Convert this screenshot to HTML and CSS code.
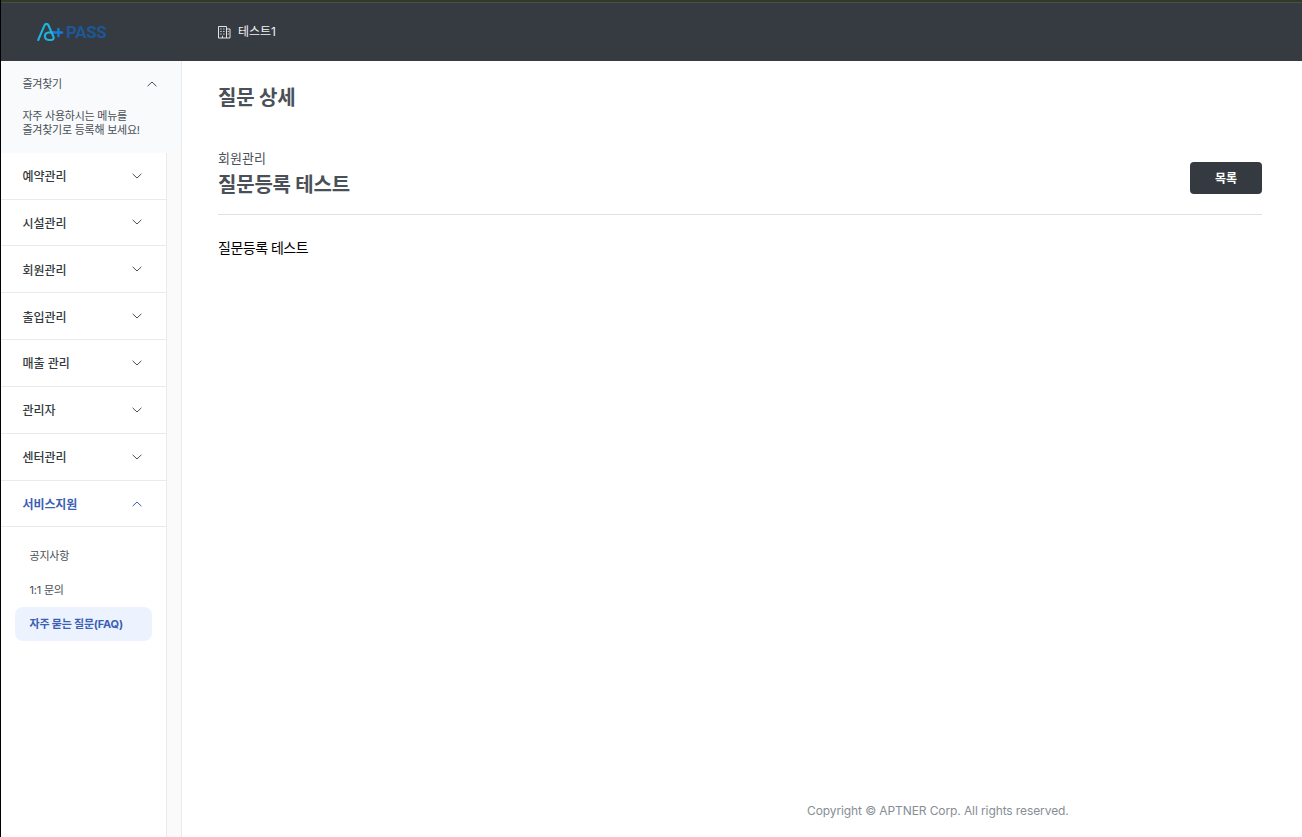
FILE: index.html
```
<!DOCTYPE html>
<html lang="ko">

<head>
  <meta charset="UTF-8" />
  <meta name="viewport" content="width=device-width, initial-scale=1.0" />
  <title>A+ PASS</title>
  <link rel="stylesheet" href="styles.css">
</head>

<body>
  <header class="header">
    <a class="logo" href="#">
      <svg width="27" height="20" viewBox="0 0 27 20" fill="none" stroke-linecap="round" stroke-linejoin="round">
        <path d="M1.2 18 L7.6 3.2 C8.4 1.4 10.6 1.4 11.4 3.2 L16.4 14.6 C17.2 16.7 16 18 14 18 L11.8 18 C6.2 17.8 7 10.8 11.7 10.5 L17 10.5" stroke="#1db5df" stroke-width="2.1" />
        <path d="M17 10.5 H25 M21.4 7 V14" stroke="#197bd9" stroke-width="2.4" />
      </svg>
      <span class="logo-text">PASS</span>
    </a>
    <div class="center-name">
      <svg width="14" height="14" viewBox="0 0 14 14" fill="none" stroke="#e1e3e5">
        <path d="M1.5 1.5 H9.5 V13 H1.5 Z M9.5 4 H13 V13 H9.5" />
        <path d="M3.3 4 H4.6 M6.2 4 H7.5 M3.3 6.5 H4.6 M6.2 6.5 H7.5 M3.3 9 H4.6 M6.2 9 H7.5 M10.7 6.5 H11.8 M10.7 9 H11.8 M5.5 10.8 V13" />
      </svg>
      <span>테스트1</span>
    </div>
  </header>

  <div class="container">
    <aside class="sidebar">
      <div class="favorite">
        <div class="favorite-title">
          <span>즐겨찾기</span>
          <svg class="arrow" viewBox="0 0 10 6"><path d="M.6 5.2 L5 1 L9.4 5.2" /></svg>
        </div>
        <p>자주 사용하시는 메뉴를<br>즐겨찾기로 등록해 보세요!</p>
      </div>
      <nav class="menu">
        <div class="menu-item"><span>예약관리</span><svg class="arrow" viewBox="0 0 10 6"><path d="M.6 .8 L5 5 L9.4 .8" /></svg></div>
        <div class="menu-item"><span>시설관리</span><svg class="arrow" viewBox="0 0 10 6"><path d="M.6 .8 L5 5 L9.4 .8" /></svg></div>
        <div class="menu-item"><span>회원관리</span><svg class="arrow" viewBox="0 0 10 6"><path d="M.6 .8 L5 5 L9.4 .8" /></svg></div>
        <div class="menu-item"><span>출입관리</span><svg class="arrow" viewBox="0 0 10 6"><path d="M.6 .8 L5 5 L9.4 .8" /></svg></div>
        <div class="menu-item"><span>매출 관리</span><svg class="arrow" viewBox="0 0 10 6"><path d="M.6 .8 L5 5 L9.4 .8" /></svg></div>
        <div class="menu-item"><span>관리자</span><svg class="arrow" viewBox="0 0 10 6"><path d="M.6 .8 L5 5 L9.4 .8" /></svg></div>
        <div class="menu-item"><span>센터관리</span><svg class="arrow" viewBox="0 0 10 6"><path d="M.6 .8 L5 5 L9.4 .8" /></svg></div>
        <div class="menu-item open"><span>서비스지원</span><svg class="arrow" viewBox="0 0 10 6"><path d="M.6 5.2 L5 1 L9.4 5.2" /></svg></div>
        <ul class="submenu">
          <li>공지사항</li>
          <li>1:1 문의</li>
          <li class="active">자주 묻는 질문(FAQ)</li>
        </ul>
      </nav>
    </aside>

    <main class="content">
      <h1>질문 상세</h1>
      <div class="question-head">
        <div class="question-title">
          <p class="category">회원관리</p>
          <h2>질문등록 테스트</h2>
        </div>
        <button type="button" class="list-button">목록</button>
      </div>
      <div class="question-body">질문등록 테스트</div>
      <footer class="footer">Copyright © APTNER Corp. All rights reserved.</footer>
    </main>
  </div>
</body>

</html>
```

FILE: styles.css
```
* {
  box-sizing: border-box;
}

html,
body {
  margin: 0;
  padding: 0;
  height: 100%;
}

body {
  display: flex;
  flex-direction: column;
  font-family: Inter, "Noto Sans CJK KR", sans-serif;
  color: #495057;
  background: #fff;
  border-left: 1px solid #000;
  overflow: hidden;
}

h1,
h2,
p,
ul {
  margin: 0;
  padding: 0;
}

/* header */
.header {
  display: flex;
  align-items: center;
  flex: 0 0 61px;
  background: #363b41;
  border-top: 2px solid #31392b;
  box-shadow: inset 0 1px #495045;
}

.logo {
  display: flex;
  align-items: center;
  gap: 2px;
  width: 216px;
  padding-left: 36px;
  text-decoration: none;
}

.logo-text {
  font-family: Roboto, sans-serif;
  font-size: 17px;
  font-weight: 700;
  line-height: 20px;
  letter-spacing: -0.4px;
  color: #1c5897;
}

.center-name {
  display: flex;
  align-items: center;
  gap: 7px;
  font-size: 12px;
  line-height: 18px;
  color: #f1f3f5;
}

/* sidebar */
.container {
  display: flex;
  flex: 1;
  min-height: 0;
}

.sidebar {
  display: flex;
  flex-direction: column;
  width: 181px;
  background: #fafafa;
  border-right: 1px solid #e9eaec;
}

.arrow {
  width: 10px;
  height: 6px;
  fill: none;
  stroke: #495057;
  stroke-width: 1;
}

.favorite {
  height: 91.7px;
  padding: 14px 24px 0 21.5px;
  background: #f8fafc;
  font-size: 11px;
  letter-spacing: -0.25px;
}

.favorite-title {
  display: flex;
  justify-content: space-between;
  align-items: center;
  line-height: 18px;
}

.favorite p {
  margin-top: 16px;
  line-height: 14px;
  white-space: nowrap;
}

.menu {
  flex: 1;
  width: 166px;
  background: #fff;
  border-right: 1px solid #e9eaec;
}

.menu-item {
  display: flex;
  justify-content: space-between;
  align-items: center;
  height: 46.85px;
  padding: 0 24px 0 21.5px;
  border-bottom: 1px solid #e9eaec;
  font-size: 12px;
  font-weight: 500;
  color: #343a40;
}

.menu-item.open {
  color: #3b5fb5;
  font-weight: 700;
  letter-spacing: -0.1px;
}

.menu-item.open .arrow {
  stroke: #3b5fb5;
}

.submenu {
  padding: 11.5px 14px 0 14px;
  list-style: none;
}

.submenu li {
  height: 34px;
  padding-left: 14.5px;
  font-size: 11px;
  line-height: 34px;
  letter-spacing: -0.2px;
}

.submenu .active {
  border-radius: 8px;
  background: #ecf3ff;
  color: #3b5fb5;
  font-weight: 700;
}

/* content */
.content {
  display: flex;
  flex-direction: column;
  flex: 1;
  padding: 21px 40px 16px 36px;
}

.content h1,
.content h2 {
  font-size: 20px;
  font-weight: 700;
  line-height: 32px;
  letter-spacing: -0.2px;
}

.question-head {
  display: flex;
  justify-content: space-between;
  align-items: flex-start;
  height: 67px;
  margin-top: 34px;
  border-bottom: 1px solid #dee2e6;
}

.category {
  font-size: 13px;
  line-height: 20px;
}

.question-title h2 {
  margin-top: 1px;
}

.list-button {
  width: 72px;
  height: 32px;
  margin-top: 14px;
  padding: 0 0 2px;
  border: none;
  border-radius: 4px;
  background: #343a40;
  color: #fff;
  font-family: inherit;
  font-size: 12px;
  font-weight: 700;
}

.question-body {
  margin-top: 22px;
  font-size: 14px;
  line-height: 22px;
  letter-spacing: -0.5px;
  color: #000;
}

.footer {
  margin-top: auto;
  padding-left: 589px;
  font-size: 12px;
  line-height: 20px;
  letter-spacing: -0.1px;
  color: #868e96;
}
```
